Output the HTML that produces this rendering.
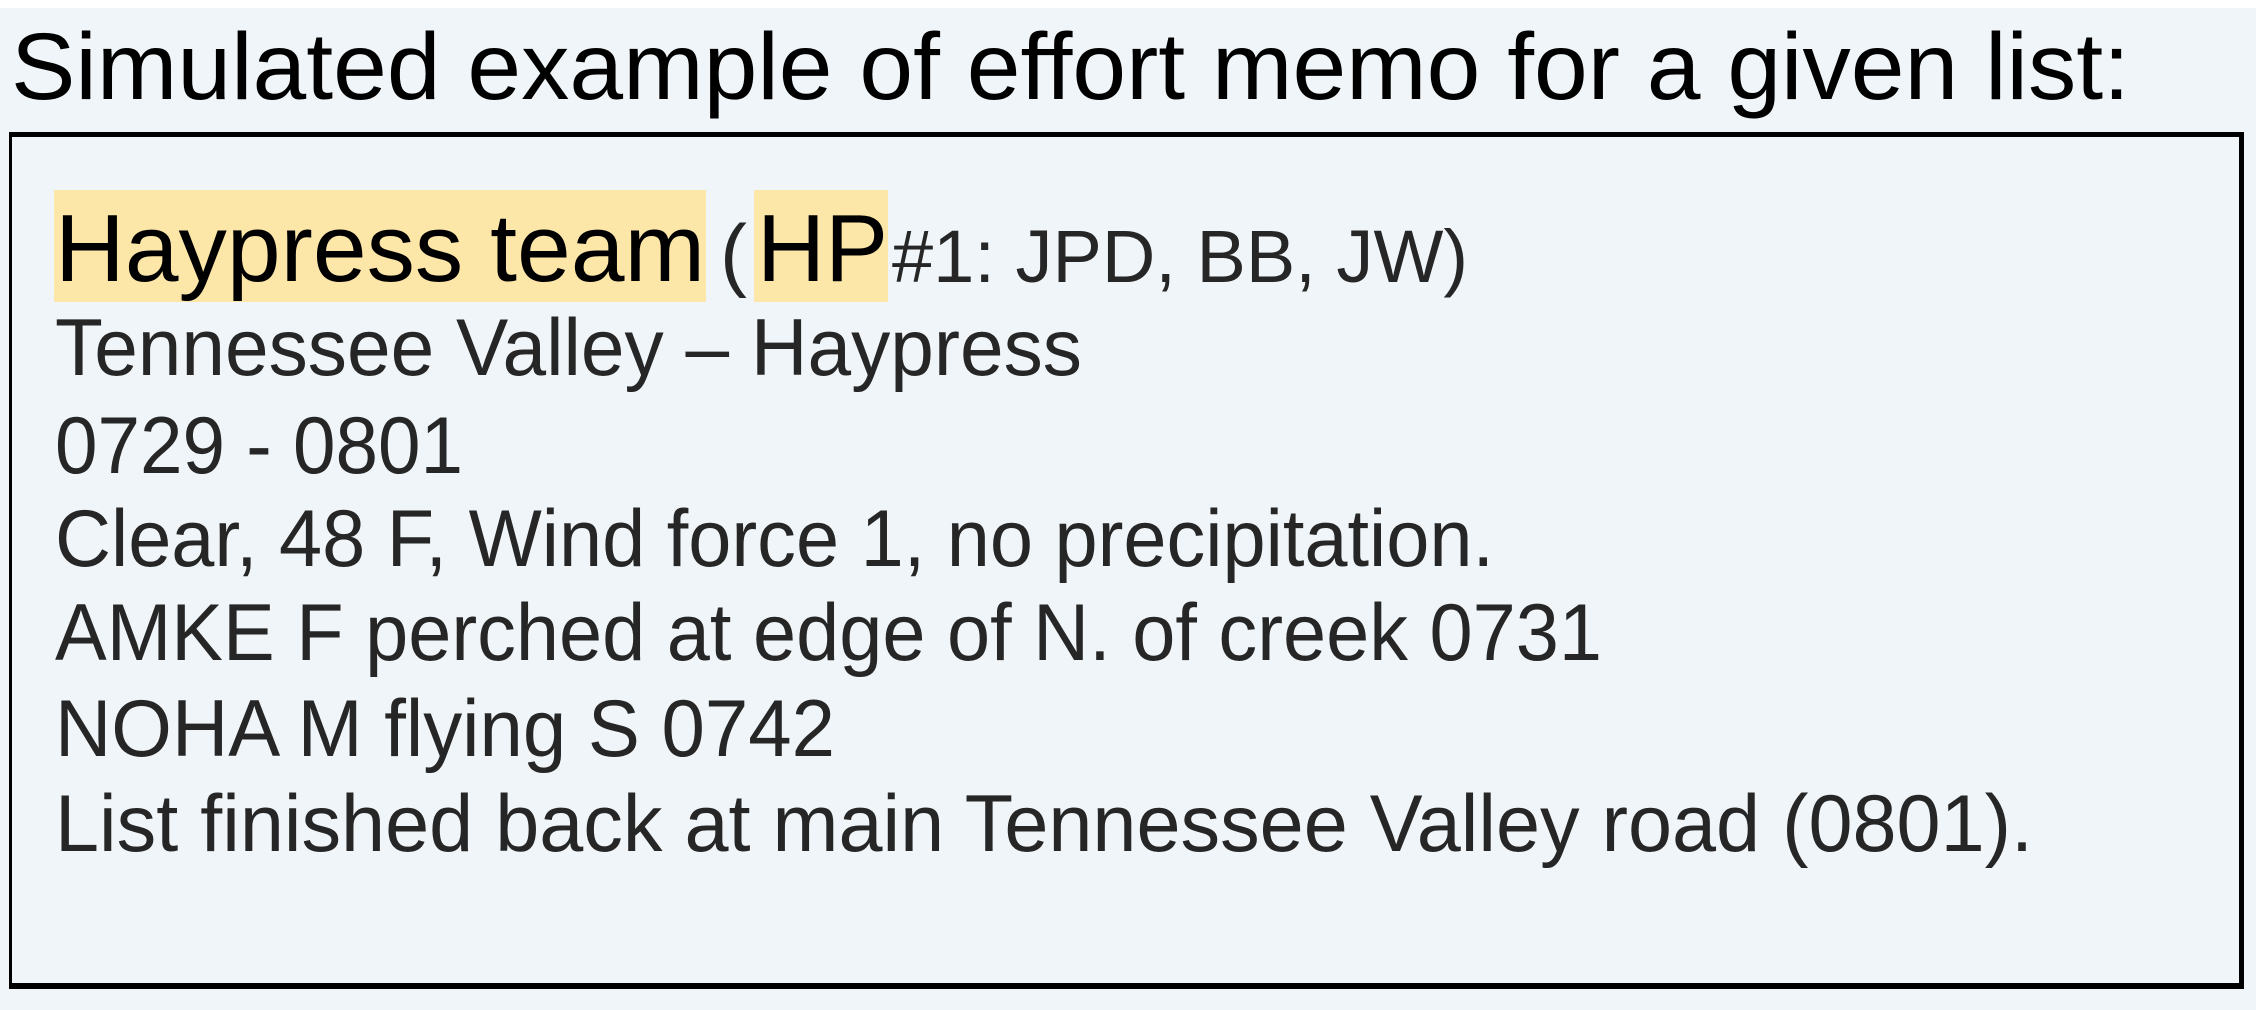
<!DOCTYPE html>
<html><head><meta charset="utf-8">
<style>
html,body{margin:0;padding:0;}
body{width:2256px;height:1010px;background:#eff5f8;position:relative;overflow:hidden;font-family:"Liberation Sans",Arial,sans-serif;}
.top{position:absolute;left:0;top:0;width:2256px;height:8px;background:#fff;}
.t{position:absolute;white-space:nowrap;line-height:1;transform-origin:0 0;}
.box{position:absolute;left:9px;top:132px;width:2227px;height:846px;border-style:solid;border-color:#000;border-width:5px 5px 6px 3px;}
.hl{position:absolute;background:#fce6a8;}
.g{color:#262626;font-size:81px;}
</style></head><body>
<div class="top"></div>
<div class="t" id="h" style="left:11px;top:20px;font-size:95px;color:#000;">Simulated example of effort memo for a given list:</div>
<div class="box"></div>
<div class="hl" style="left:54px;top:190px;width:652px;height:112px;"></div>
<div class="hl" style="left:754px;top:190px;width:134px;height:112px;"></div>
<div class="t" id="a" style="left:55px;top:201px;font-size:96px;color:#000;">Haypress team</div>
<div class="t" id="p" style="left:720px;top:214px;font-size:81px;color:#262626;">(</div>
<div class="t" id="b" style="left:757px;top:201px;font-size:96px;color:#000;">HP</div>
<div class="t" id="c" style="left:892px;top:220px;font-size:74px;color:#262626;">#1: JPD, BB, JW)</div>
<div class="t g" id="l2" style="left:55px;top:308px;">Tennessee Valley – Haypress</div>
<div class="t g" id="l3" style="left:55px;top:406px;">0729 - 0801</div>
<div class="t g" id="l4" style="left:55px;top:499px;">Clear, 48 F, Wind force 1, no precipitation.</div>
<div class="t g" id="l5" style="left:55px;top:593px;">AMKE F perched at edge of N. of creek 0731</div>
<div class="t g" id="l6" style="left:55px;top:689px;">NOHA M flying S 0742</div>
<div class="t g" id="l7" style="left:55px;top:784px;">List finished back at main Tennessee Valley road (0801).</div>
<script>
var W={h:2119,a:650,b:131,c:576,l2:1027,l3:408,l4:1439,l5:1547,l6:780,l7:1978};
for(var k in W){var e=document.getElementById(k);var w=e.getBoundingClientRect().width;if(w>0)e.style.transform='scaleX('+(W[k]/w)+')';}
</script>
</body></html>
